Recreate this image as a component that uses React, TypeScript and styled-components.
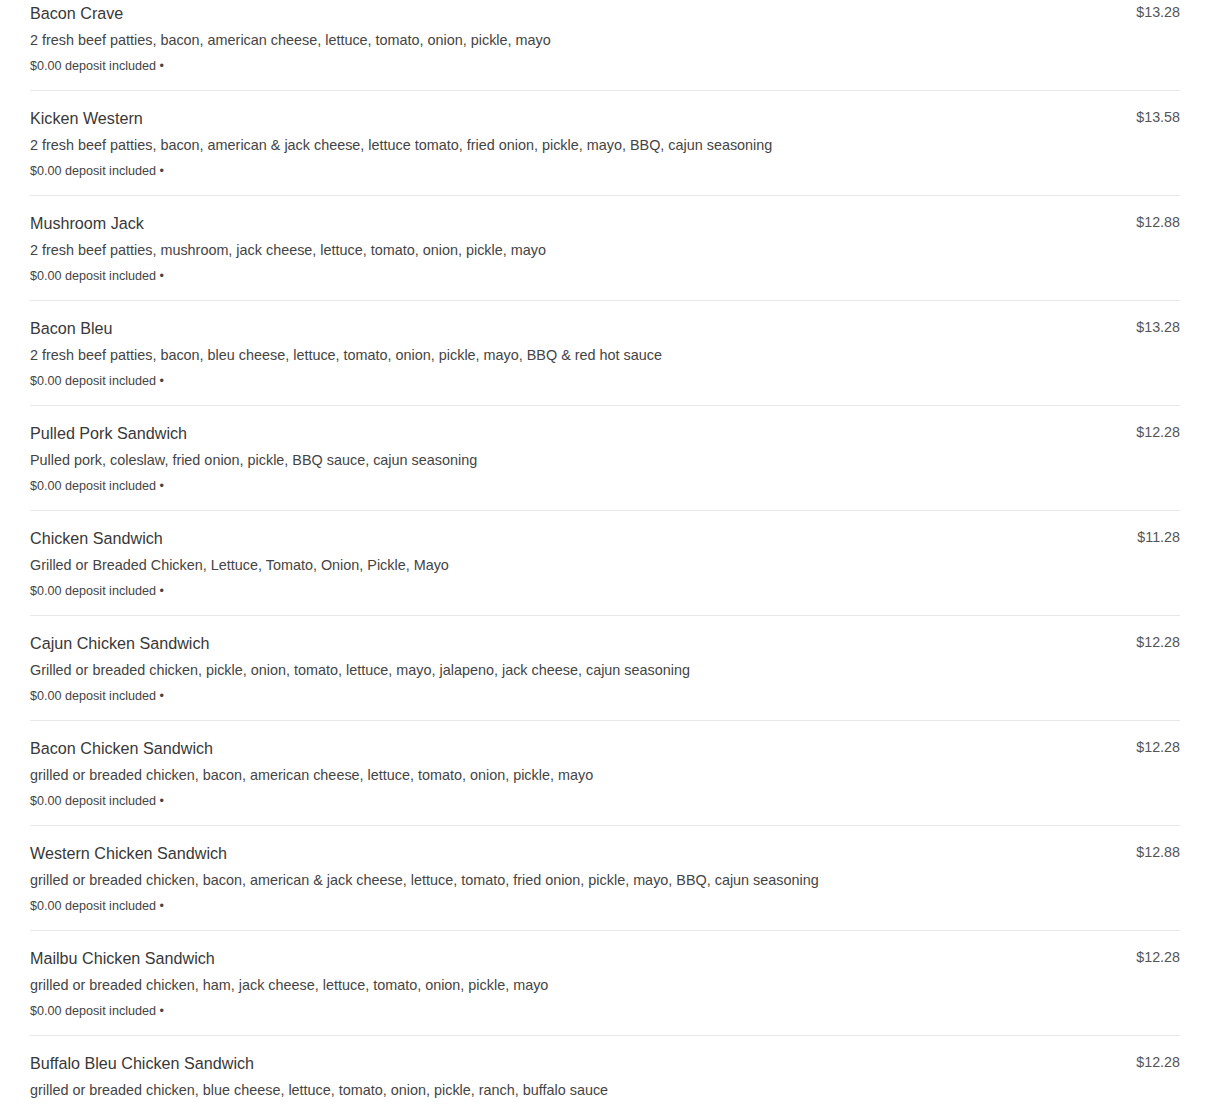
import React from "react";
import styled, { createGlobalStyle } from "styled-components";

const Global = createGlobalStyle`
  html, body { margin: 0; padding: 0; background: #fff; }
  body { font-family: "Liberation Sans", Arial, sans-serif; color: #333; }
`;

const Page = styled.div`
  padding: 0 30px;
`;

const List = styled.ul`
  list-style: none;
  margin: 0;
  padding: 0;
`;

const Item = styled.li`
  display: flex;
  justify-content: space-between;
  align-items: flex-start;
  padding: 18px 0 16px;
  border-bottom: 1px solid #e8e8e8;
  &:first-child { padding-top: 4px; }
`;

const Info = styled.div`
  display: flex;
  flex-direction: column;
  min-width: 0;
`;

const Title = styled.div`
  font-size: 16.15px;
  line-height: 18px;
  color: #383838;
`;

const Desc = styled.div`
  margin-top: 8px;
  font-size: 14.4px;
  line-height: 20px;
  color: #444;
`;

const Deposit = styled.div`
  margin-top: 8px;
  font-size: 12.6px;
  line-height: 16px;
  color: #444;
`;

const Price = styled.div`
  font-size: 14.3px;
  line-height: 20px;
  color: #555;
  margin-top: -2px;
  white-space: nowrap;
`;

const items = [
  ["Bacon Crave", "2 fresh beef patties, bacon, american cheese, lettuce, tomato, onion, pickle, mayo", "$13.28"],
  ["Kicken Western", "2 fresh beef patties, bacon, american & jack cheese, lettuce tomato, fried onion, pickle, mayo, BBQ, cajun seasoning", "$13.58"],
  ["Mushroom Jack", "2 fresh beef patties, mushroom, jack cheese, lettuce, tomato, onion, pickle, mayo", "$12.88"],
  ["Bacon Bleu", "2 fresh beef patties, bacon, bleu cheese, lettuce, tomato, onion, pickle, mayo, BBQ & red hot sauce", "$13.28"],
  ["Pulled Pork Sandwich", "Pulled pork, coleslaw, fried onion, pickle, BBQ sauce, cajun seasoning", "$12.28"],
  ["Chicken Sandwich", "Grilled or Breaded Chicken, Lettuce, Tomato, Onion, Pickle, Mayo", "$11.28"],
  ["Cajun Chicken Sandwich", "Grilled or breaded chicken, pickle, onion, tomato, lettuce, mayo, jalapeno, jack cheese, cajun seasoning", "$12.28"],
  ["Bacon Chicken Sandwich", "grilled or breaded chicken, bacon, american cheese, lettuce, tomato, onion, pickle, mayo", "$12.28"],
  ["Western Chicken Sandwich", "grilled or breaded chicken, bacon, american & jack cheese, lettuce, tomato, fried onion, pickle, mayo, BBQ, cajun seasoning", "$12.88"],
  ["Mailbu Chicken Sandwich", "grilled or breaded chicken, ham, jack cheese, lettuce, tomato, onion, pickle, mayo", "$12.28"],
  ["Buffalo Bleu Chicken Sandwich", "grilled or breaded chicken, blue cheese, lettuce, tomato, onion, pickle, ranch, buffalo sauce", "$12.28"],
];

export default function App() {
  return (
    <Page>
      <Global />
      <List>
        {items.map(([t, d, p], i) => (
          <Item key={i}>
            <Info>
              <Title>{t}</Title>
              <Desc>{d}</Desc>
              <Deposit>$0.00 deposit included •</Deposit>
            </Info>
            <Price>{p}</Price>
          </Item>
        ))}
      </List>
    </Page>
  );
}
